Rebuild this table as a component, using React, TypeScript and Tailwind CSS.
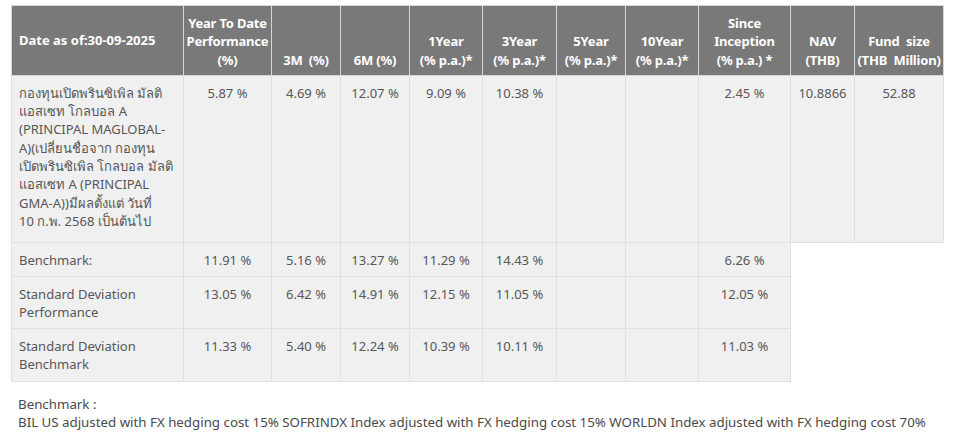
import React from 'react';

const headers: string[][] = [
  ['Year To Date', 'Performance', '(%)'],
  ['3M\u00a0 (%)'],
  ['6M (%)'],
  ['1Year', '(% p.a.)*'],
  ['3Year', '(% p.a.)*'],
  ['5Year', '(% p.a.)*'],
  ['10Year', '(% p.a.)*'],
  ['Since', 'Inception', '(% p.a.) *'],
  ['NAV', '(THB)'],
  ['Fund\u00a0 size', '(THB\u00a0 Million)'],
];

const fundName = [
  'กองทุนเปิดพรินซิเพิล มัลติ',
  'แอสเซท โกลบอล A',
  '(PRINCIPAL MAGLOBAL-',
  'A)(เปลี่ยนชื่อจาก กองทุน',
  'เปิดพรินซิเพิล โกลบอล มัลติ',
  'แอสเซท A (PRINCIPAL',
  'GMA-A))มีผลตั้งแต่ วันที่',
  '10 ก.พ. 2568 เป็นต้นไป',
];

const rows: { label: string[]; values: string[]; pad: string }[] = [
  {
    label: fundName,
    values: ['5.87 %', '4.69 %', '12.07 %', '9.09 %', '10.38 %', '', '', '2.45 %', '10.8866', '52.88'],
    pad: 'pb-[12px]',
  },
  {
    label: ['Benchmark:'],
    values: ['11.91 %', '5.16 %', '13.27 %', '11.29 %', '14.43 %', '', '', '6.26 %'],
    pad: 'pb-[6px]',
  },
  {
    label: ['Standard Deviation', 'Performance'],
    values: ['13.05 %', '6.42 %', '14.91 %', '12.15 %', '11.05 %', '', '', '12.05 %'],
    pad: 'pb-[7px]',
  },
  {
    label: ['Standard Deviation', 'Benchmark'],
    values: ['11.33 %', '5.40 %', '12.24 %', '10.39 %', '10.11 %', '', '', '11.03 %'],
    pad: 'pb-[7px]',
  },
];

const colWidths = ['w-[172px]', 'w-[88px]', 'w-[69px]', 'w-[69px]', 'w-[73px]', 'w-[74px]', 'w-[69px]', 'w-[73px]', 'w-[92px]', 'w-[64px]', 'w-[89px]'];

const Lines = ({ lines }: { lines: string[] }) => (
  <>
    {lines.map((l, i) => (
      <React.Fragment key={i}>
        {i > 0 && <br />}
        {l}
      </React.Fragment>
    ))}
  </>
);

export default function App() {
  return (
    <div className="w-[955px] h-[440px] bg-white pt-[5px] pl-[11px] font-['Noto_Sans','Noto_Sans_CJK_SC',sans-serif]">
      <table className="table-fixed border-collapse w-[932px] text-[13px] leading-[18.3px]">
        <colgroup>
          {colWidths.map((w, i) => (
            <col key={i} className={w} />
          ))}
        </colgroup>
        <thead>
          <tr className="bg-[#797979] text-white font-bold">
            <th className="border border-[#d6d6d6] px-[7px] text-left align-middle font-bold whitespace-nowrap">
              Date as of:30-09-2025
            </th>
            {headers.map((h, i) => (
              <th key={i} className="border border-[#d6d6d6] px-0 pt-2 pb-[6px] text-center align-bottom font-bold whitespace-nowrap tracking-[-0.2px]">
                <Lines lines={h} />
              </th>
            ))}
          </tr>
        </thead>
        <tbody className="text-[#575757]">
          {rows.map((r, ri) => (
            <tr key={ri}>
              <td className={`border border-[#e0e0e0] bg-[#f0f0f0] pl-[7px] pr-[2px] pt-2 ${r.pad} align-top text-left whitespace-nowrap`}>
                <Lines lines={r.label} />
              </td>
              {r.values.map((v, vi) => (
                <td key={vi} className={`border border-[#e0e0e0] bg-[#f0f0f0] px-[2px] pt-2 ${r.pad} align-top text-center`}>
                  {v}
                </td>
              ))}
            </tr>
          ))}
        </tbody>
      </table>
      <div className="mt-[13px] pl-[7px] text-[13.3px] leading-[18.6px] text-[#4a4a4a]">
        <p>Benchmark :</p>
        <p>BIL US adjusted with FX hedging cost 15% SOFRINDX Index adjusted with FX hedging cost 15% WORLDN Index adjusted with FX hedging cost 70%</p>
      </div>
    </div>
  );
}
